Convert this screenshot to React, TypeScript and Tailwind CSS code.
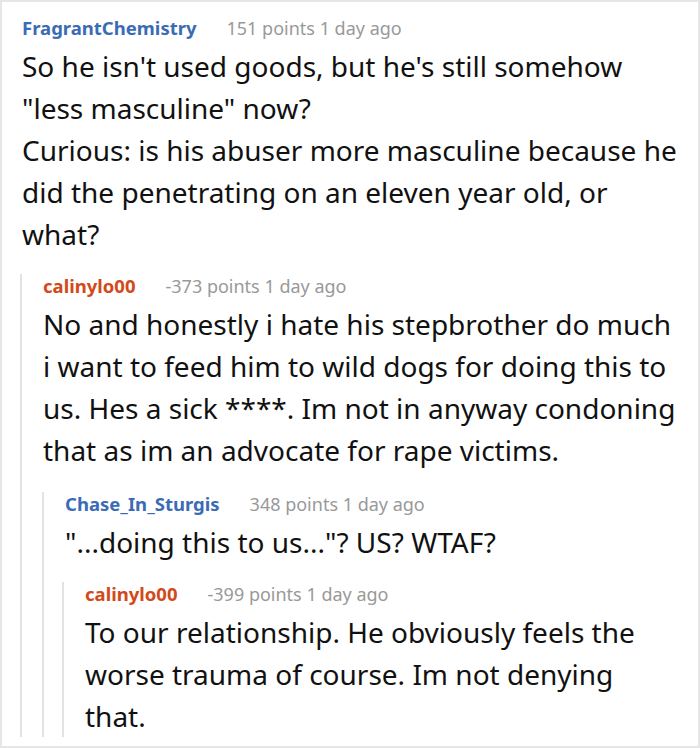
import type { ReactNode } from "react";

interface CommentProps {
  user: string;
  userColor: string;
  points: string;
  lines: string[];
}

function Comment({ user, userColor, points, lines }: CommentProps) {
  return (
    <div>
      <div className="flex items-baseline text-[18px] leading-[24px]">
        <span className={`text-[18.5px] font-bold ${userColor}`}>{user}</span>
        <span className="ml-[30px] text-[#999999]">{points} 1 day ago</span>
      </div>
      <div className="mt-[5px] text-[28px] leading-[42px] text-[#111111]">
        {lines.map((line, i) => (
          <div key={i} className="whitespace-nowrap">
            {line}
          </div>
        ))}
      </div>
    </div>
  );
}

function Reply({ className, children }: { className: string; children: ReactNode }) {
  return <div className={`border-l-2 border-[#e3e3e3] pl-[21px] ${className}`}>{children}</div>;
}

export default function App() {
  return (
    <div
      className="w-[700px] h-[748px] overflow-hidden border-2 border-[#e6e6e6] bg-white pl-[20px] pt-[14px]"
      style={{ fontFamily: '"Noto Sans", "Open Sans", sans-serif' }}
    >
      <Comment
        user="FragrantChemistry"
        userColor="text-[#3a6cb5]"
        points="151 points"
        lines={[
          "So he isn't used goods, but he's still somehow",
          "\"less masculine\" now?",
          "Curious: is his abuser more masculine because he",
          "did the penetrating on an eleven year old, or",
          "what?",
        ]}
      />
      <Reply className="ml-[-2px] mt-[19px]">
        <Comment
          user="calinylo00"
          userColor="text-[#d2491a]"
          points="-373 points"
          lines={[
            "No and honestly i hate his stepbrother do much",
            "i want to feed him to wild dogs for doing this to",
            "us. Hes a sick ****. Im not in anyway condoning",
            "that as im an advocate for rape victims.",
          ]}
        />
        <Reply className="ml-[-1px] mt-[21px]">
          <Comment
            user="Chase_In_Sturgis"
            userColor="text-[#3a6cb5]"
            points="348 points"
            lines={["\"...doing this to us...\"? US? WTAF?"]}
          />
          <Reply className="ml-[-3px] mt-[19px]">
            <Comment
              user="calinylo00"
              userColor="text-[#d2491a]"
              points="-399 points"
              lines={[
                "To our relationship. He obviously feels the",
                "worse trauma of course. Im not denying",
                "that.",
              ]}
            />
          </Reply>
        </Reply>
      </Reply>
    </div>
  );
}
